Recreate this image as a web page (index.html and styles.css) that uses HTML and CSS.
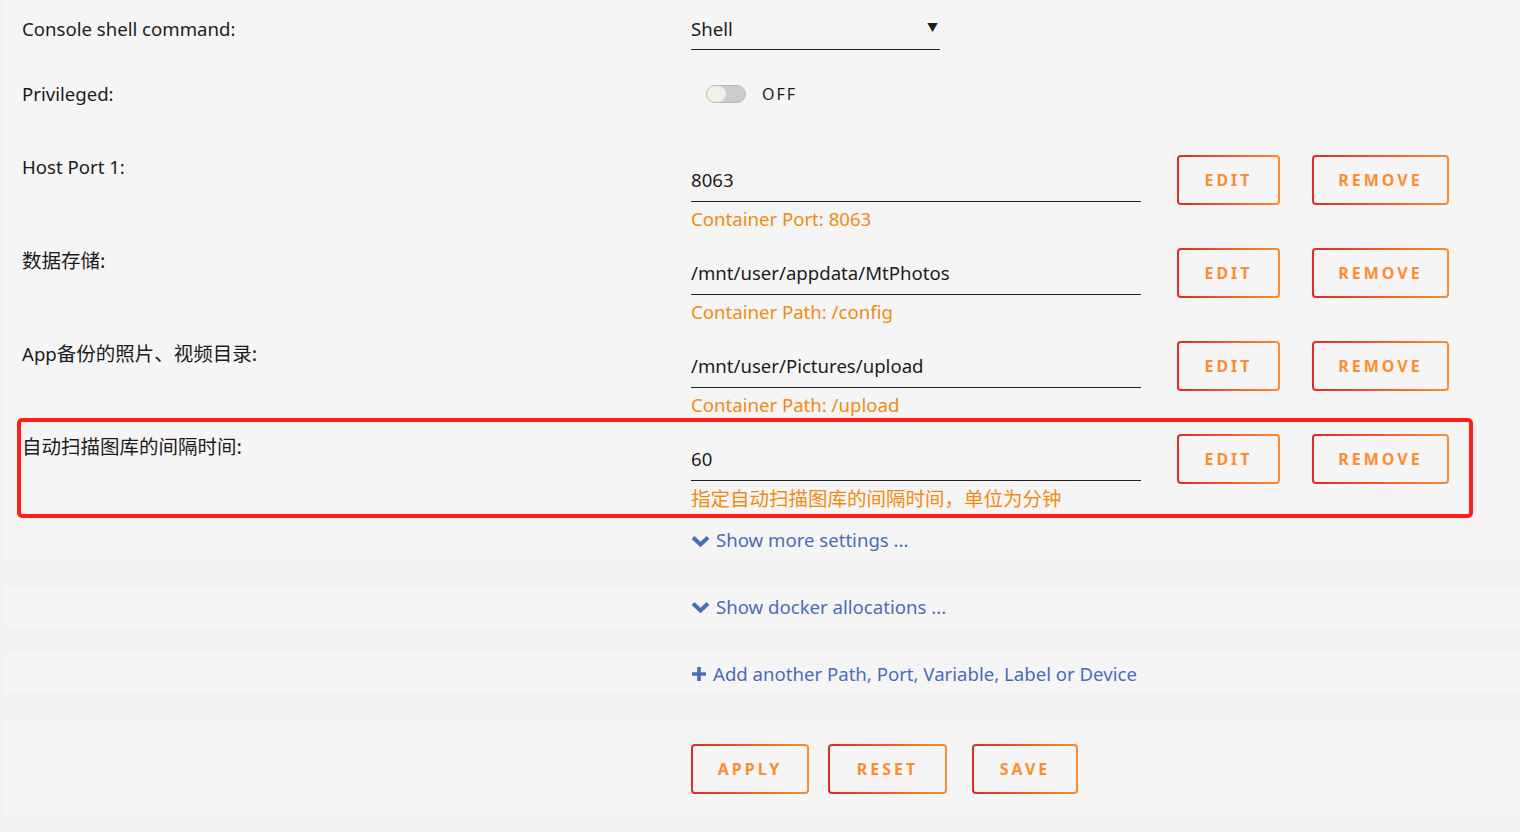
FILE: index.html
```html
<!DOCTYPE html>
<html lang="en">
<head>
    <meta charset="UTF-8">
    <meta name="viewport" content="width=device-width, initial-scale=1.0">
    <title>Update Container</title>
    <link rel="stylesheet" href="styles.css">
</head>
<body>
    <div class="settings">
        <div class="row rowSelect">
            <div class="label">Console shell command:</div>
            <div class="select">
                <span>Shell</span>
                <span class="arrow">&#9660;</span>
            </div>
        </div>
        <div class="row rowSwitch">
            <div class="label">Privileged:</div>
            <div class="switchWrap">
                <span class="switch"><span class="knob"></span></span>
                <span class="switchText">OFF</span>
            </div>
        </div>
        <div class="row rowConfig">
            <div class="label">Host Port 1:</div>
            <div class="field">
                <div class="input">8063</div>
                <div class="hint">Container Port: 8063</div>
            </div>
            <div class="actions">
                <button class="btn btnEdit">Edit</button>
                <button class="btn btnRemove">Remove</button>
            </div>
        </div>
        <div class="row rowConfig">
            <div class="label cjk">数据存储:</div>
            <div class="field">
                <div class="input">/mnt/user/appdata/MtPhotos</div>
                <div class="hint">Container Path: /config</div>
            </div>
            <div class="actions">
                <button class="btn btnEdit">Edit</button>
                <button class="btn btnRemove">Remove</button>
            </div>
        </div>
        <div class="row rowConfig">
            <div class="label"><span>App</span><span class="cjk">备份的照片、视频目录:</span></div>
            <div class="field">
                <div class="input">/mnt/user/Pictures/upload</div>
                <div class="hint">Container Path: /upload</div>
            </div>
            <div class="actions">
                <button class="btn btnEdit">Edit</button>
                <button class="btn btnRemove">Remove</button>
            </div>
        </div>
        <div class="row rowConfig marked">
            <div class="label cjk">自动扫描图库的间隔时间:</div>
            <div class="field">
                <div class="input">60</div>
                <div class="hint cjk">指定自动扫描图库的间隔时间，单位为分钟</div>
            </div>
            <div class="actions">
                <button class="btn btnEdit">Edit</button>
                <button class="btn btnRemove">Remove</button>
            </div>
            <div class="highlight"></div>
        </div>
        <div class="row rowLink">
            <a class="link" href="#">
                <svg class="chev" width="19" height="13" viewBox="0 0 19 13"><path d="M2 2.5 L9.5 9.5 L17 2.5" fill="none" stroke="#486dba" stroke-width="4"/></svg>
                Show more settings ...
            </a>
        </div>
    </div>

    <div class="band">
        <a class="link" href="#">
            <svg class="chev" width="19" height="13" viewBox="0 0 19 13"><path d="M2 2.5 L9.5 9.5 L17 2.5" fill="none" stroke="#486dba" stroke-width="4"/></svg>
            Show docker allocations ...
        </a>
    </div>

    <div class="band">
        <a class="link" href="#">
            <svg class="plus" width="16" height="16" viewBox="0 0 16 16"><path d="M8 1 V15 M1 8 H15" fill="none" stroke="#486dba" stroke-width="3.6"/></svg>
            Add another Path, Port, Variable, Label or Device
        </a>
    </div>

    <div class="band bandButtons">
        <button class="btn btnApply">Apply</button>
        <button class="btn btnReset">Reset</button>
        <button class="btn btnSave">Save</button>
    </div>
</body>
</html>
```

FILE: styles.css
```css
body {
    margin: 0;
    background-color: #f2f2f2;
    color: #1c1c1c;
    font-family: "Noto Sans", "Noto Sans CJK SC", sans-serif;
    font-size: 18.6px;
}
.cjk {
    font-family: "Noto Sans CJK SC", sans-serif;
    font-size: 19.5px;
}
.settings {
    background-color: #f5f5f5;
    margin-left: 4px;
    padding: 8px 0 7px 18px;
}
.row {
    display: flex;
}
.label {
    width: 669px;
    flex-shrink: 0;
    line-height: 24px;
}
.rowSelect {
    height: 42px;
    align-items: center;
}
.select {
    width: 249px;
    height: 41px;
    border-bottom: 1px solid #222;
    display: flex;
    align-items: center;
    justify-content: space-between;
}
.arrow {
    font-size: 11px;
    margin-right: 2px;
    margin-top: -4px;
}
.rowSwitch {
    margin-top: 24px;
    height: 40px;
    align-items: center;
}
.switchWrap {
    display: flex;
    align-items: center;
    padding-left: 15px;
}
.switch {
    width: 38px;
    height: 16px;
    border: 1px solid #b8b8b8;
    border-radius: 9px;
    background-color: #cccccc;
    position: relative;
}
.knob {
    position: absolute;
    left: 0;
    top: 0;
    width: 19px;
    height: 16px;
    border-radius: 8px;
    background-color: #eef3e6;
}
.switchText {
    margin-left: 16px;
    font-size: 16px;
    letter-spacing: 2px;
}
.rowConfig {
    height: 81px;
    margin-bottom: 12px;
}
.rowSwitch + .rowConfig {
    margin-top: 41px;
}
.field {
    width: 450px;
    flex-shrink: 0;
}
.input {
    border-bottom: 1px solid #222;
    display: flex;
    align-items: center;
    padding-top: 2px;
    box-sizing: border-box;
    height: 47px;
}
.hint {
    color: #ef8c12;
    line-height: 34px;
}
.actions {
    display: flex;
    padding-left: 36px;
    gap: 32px;
}
.btn {
    font-family: "Noto Sans", sans-serif;
    font-weight: bold;
    font-size: 16px;
    letter-spacing: 3px;
    text-transform: uppercase;
    color: #ff8c2f;
    border: 2px solid transparent;
    border-radius: 4px;
    background: linear-gradient(#f5f5f5, #f5f5f5) padding-box,
                linear-gradient(90deg, #e22828, #ff8c2f) border-box;
    height: 50px;
    padding: 0;
    cursor: pointer;
}
.btnEdit {
    width: 103px;
}
.btnRemove {
    width: 137px;
}
.marked {
    position: relative;
}
.highlight {
    position: absolute;
    left: -5px;
    top: -16px;
    width: 1456px;
    height: 100px;
    box-sizing: border-box;
    border: 4px solid #ff1e16;
    border-radius: 5px;
    pointer-events: none;
}
.rowLink {
    padding-left: 669px;
    height: 26px;
    align-items: center;
}
.link {
    color: #486dba;
    text-decoration: none;
    display: flex;
    align-items: center;
    gap: 6px;
    line-height: 26px;
}
.chev {
    margin-top: 2px;
}
.band {
    background-color: #f5f5f5;
    margin: 26px 0 0 4px;
    height: 41px;
    padding-left: 687px;
    display: flex;
    align-items: center;
}
.bandButtons {
    height: 97px;
    gap: 19px;
}
.btnApply {
    width: 118px;
}
.btnReset {
    width: 119px;
}
.btnSave {
    width: 106px;
    margin-left: 6px;
}
```
